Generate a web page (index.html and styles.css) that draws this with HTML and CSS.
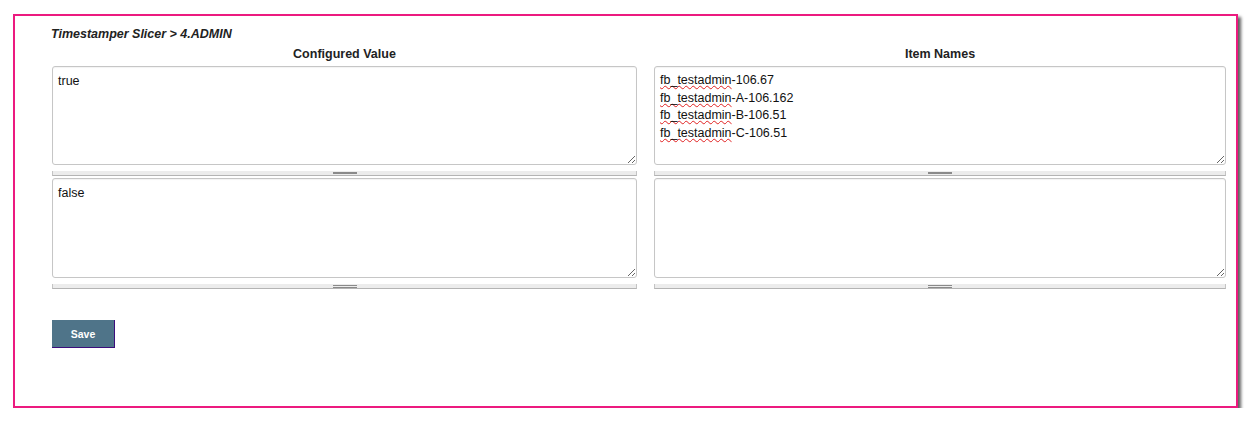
FILE: index.html
```html
<!DOCTYPE html>
<html>
<head>
<meta charset="utf-8">
<link rel="stylesheet" href="styles.css">
</head>
<body>
<div class="frame">
  <div class="title">Timestamper Slicer &gt; 4.ADMIN</div>
  <div class="columns">
    <div class="col">
      <div class="heading">Configured Value</div>
      <div class="box first">true</div>
      <div class="splitter"><span class="grip"></span></div>
      <div class="box second">false</div>
      <div class="splitter"><span class="grip double"></span></div>
    </div>
    <div class="col">
      <div class="heading">Item Names</div>
      <div class="box first list">
        <div><span class="spell">fb_testadmin</span>-106.67</div>
        <div><span class="spell">fb_testadmin</span>-A-106.162</div>
        <div><span class="spell">fb_testadmin</span>-B-106.51</div>
        <div><span class="spell">fb_testadmin</span>-C-106.51</div>
      </div>
      <div class="splitter"><span class="grip"></span></div>
      <div class="box second"></div>
      <div class="splitter"><span class="grip double"></span></div>
    </div>
  </div>
  <button class="save">Save</button>
</div>
</body>
</html>
```
FILE: styles.css
```css
html, body {
  margin: 0;
  padding: 0;
  background: #ffffff;
}
body {
  font-family: "Liberation Sans", Arial, sans-serif;
  color: #111;
}
.frame {
  box-sizing: border-box;
  margin: 14px 0 0 13px;
  width: 1225px;
  height: 394px;
  border: 2px solid #ec1a7f;
  box-shadow: 3px 3px 3px #606060;
  padding: 11px 10px 0 37px;
  background: #fff;
}
.title {
  font-size: 12.5px;
  line-height: 15px;
  font-style: italic;
  font-weight: bold;
  color: #222;
  margin-left: -1px;
}
.columns {
  display: grid;
  grid-template-columns: 585px 572px;
  column-gap: 17px;
  margin-top: 5px;
}
.col {
  display: flex;
  flex-direction: column;
}
.heading {
  font-size: 12.5px;
  line-height: 15px;
  font-weight: bold;
  text-align: center;
  color: #222;
}
.box {
  box-sizing: border-box;
  height: 99px;
  border: 1px solid #c6c6c6;
  border-radius: 3px;
  box-shadow: inset 0 1px 1px rgba(0, 0, 0, 0.05);
  padding: 6px 5px 4px;
  font-size: 12.5px;
  line-height: 17.5px;
  color: #111;
  overflow: auto;
  resize: both;
}
.box.first {
  margin-top: 4px;
}
.box.second {
  margin-top: 2px;
  height: 100px;
}
.list {
  padding-top: 5px;
  line-height: 17.6px;
}
.spell {
  text-decoration: underline wavy #e02020;
  text-decoration-thickness: 1px;
  text-underline-offset: 1px;
}
.splitter {
  box-sizing: border-box;
  height: 5px;
  margin-top: 6px;
  background: #ececec;
  border-left: 1px solid #c4c4c4;
  border-right: 1px solid #c4c4c4;
  border-bottom: 1px solid #b4b4b4;
  display: flex;
  justify-content: center;
  align-items: flex-start;
}
.grip {
  display: block;
  width: 24px;
  height: 2px;
  margin-top: 1px;
  background: #8a8a8a;
}
.grip.double {
  box-sizing: border-box;
  height: 3px;
  background: transparent;
  border-top: 1px solid #8a8a8a;
  border-bottom: 1px solid #8a8a8a;
}
.save {
  display: block;
  margin-top: 31px;
  width: 63px;
  height: 28px;
  padding: 0;
  background: #4f7489;
  border: none;
  border-right: 1px solid #3c0d7c;
  border-bottom: 1px solid #3c0d7c;
  border-radius: 0;
  color: #fff;
  font-family: "Liberation Sans", Arial, sans-serif;
  font-weight: bold;
  font-size: 10.5px;
}
```
